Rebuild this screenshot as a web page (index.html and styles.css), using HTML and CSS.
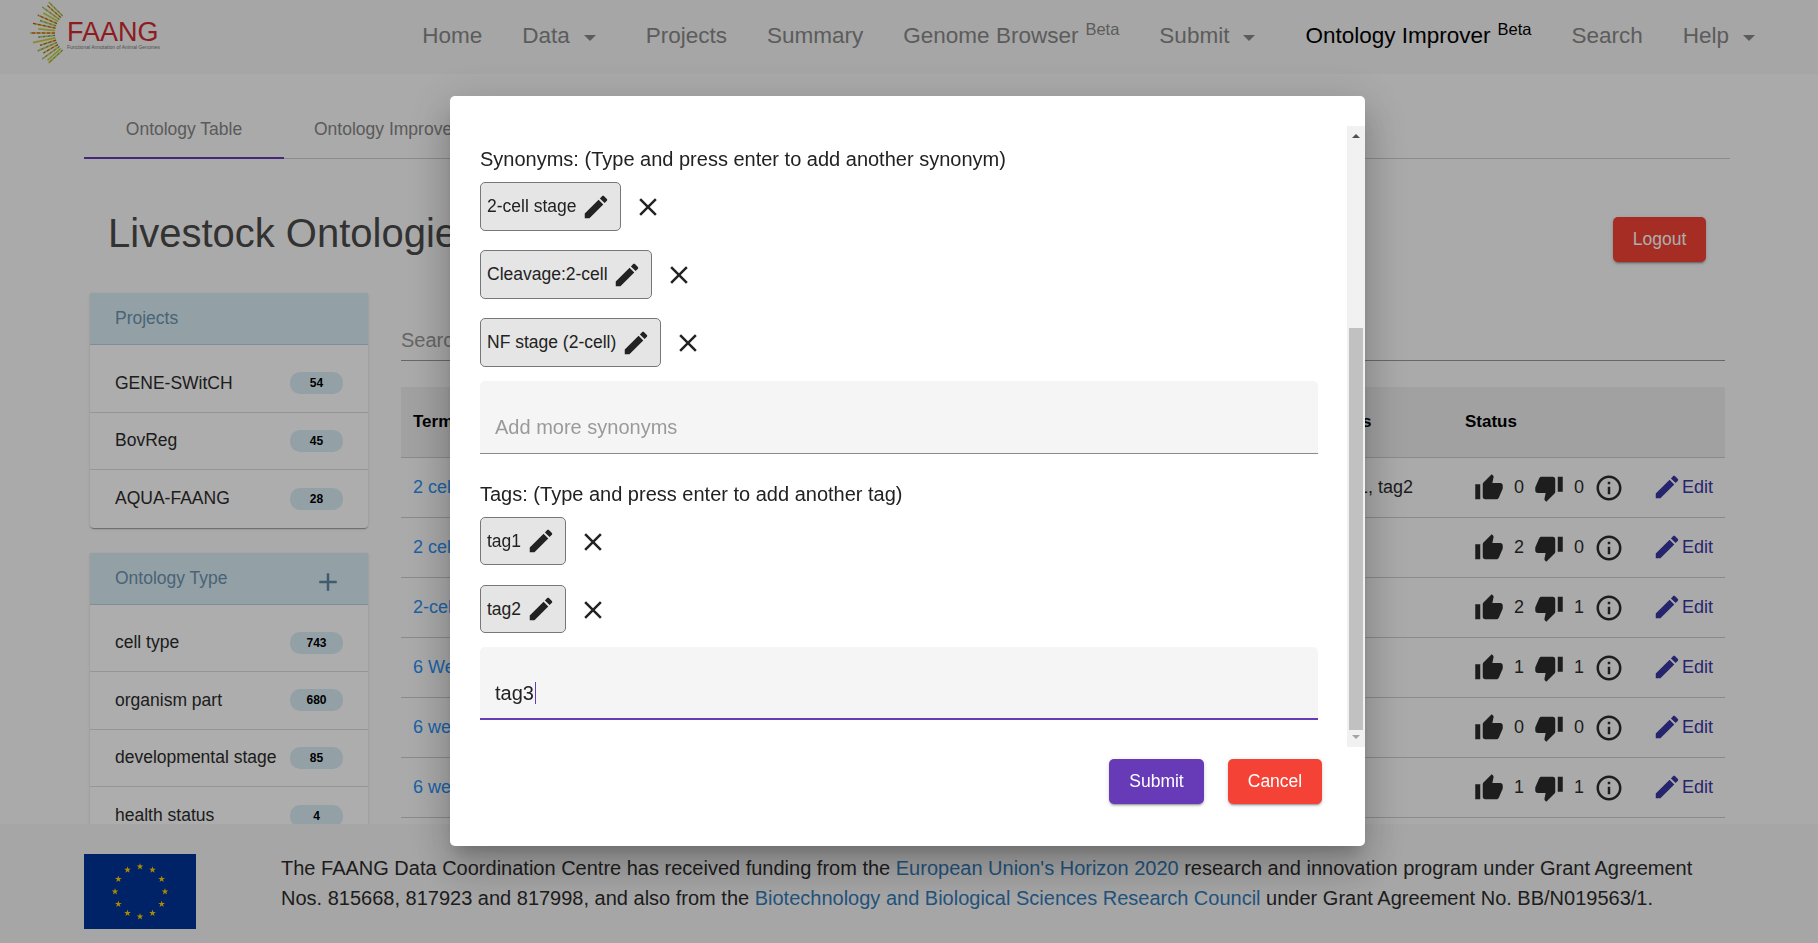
FILE: index.html
```html
<!DOCTYPE html>
<html>
<head>
    <title>FAANG Ontology Improver</title>
    <link rel="stylesheet" href="styles.css">
</head>
<body>
    <svg class="sprite" aria-hidden="true">
        <symbol id="i-up" viewBox="0 0 24 24"><path d="M1 21h4V9H1v12zm22-11c0-1.1-.9-2-2-2h-6.31l.95-4.57.03-.32c0-.41-.17-.79-.44-1.06L14.17 1 7.59 7.59C7.22 7.95 7 8.45 7 9v10c0 1.1.9 2 2 2h9c.83 0 1.54-.5 1.84-1.22l3.02-7.05c.09-.23.14-.47.14-.73v-2z"/></symbol>
        <symbol id="i-down" viewBox="0 0 24 24"><path d="M15 3H6c-.83 0-1.54.5-1.84 1.22l-3.02 7.05c-.09.23-.14.47-.14.73v2c0 1.1.9 2 2 2h6.31l-.95 4.57-.03.32c0 .41.17.79.44 1.06L9.83 23l6.59-6.59c.36-.36.58-.86.58-1.41V5c0-1.1-.9-2-2-2zm4 0v12h4V3h-4z"/></symbol>
        <symbol id="i-info" viewBox="0 0 24 24"><path d="M11 7h2v2h-2zm0 4h2v6h-2zm1-9C6.48 2 2 6.48 2 12s4.48 10 10 10 10-4.48 10-10S17.52 2 12 2zm0 18c-4.41 0-8-3.59-8-8s3.59-8 8-8 8 3.59 8 8-3.59 8-8 8z"/></symbol>
        <symbol id="i-edit" viewBox="0 0 24 24"><path d="M3 17.25V21h3.75L17.81 9.94l-3.75-3.75L3 17.25zM20.71 7.04c.39-.39.39-1.02 0-1.41l-2.34-2.34c-.39-.39-1.02-.39-1.41 0l-1.83 1.83 3.75 3.75 1.83-1.83z"/></symbol>
        <symbol id="i-close" viewBox="0 0 24 24"><path d="M19 6.41L17.59 5 12 10.59 6.41 5 5 6.41 10.59 12 5 17.59 6.41 19 12 13.41 17.59 19 19 17.59 13.41 12z"/></symbol>
        <symbol id="i-add" viewBox="0 0 24 24"><path d="M19 13h-6v6h-2v-6H5v-2h6V5h2v6h6v2z"/></symbol>
    </svg>

    <header class="topbar">
        <div class="logo">
            <svg class="logo-fan" width="36" height="66" viewBox="28 0 36 66">
                <g class="rays-base">
                    <line x1="55" y1="33" x2="30" y2="33"/>
                    <line x1="55.1" y1="30.6" x2="38.2" y2="28.8"/><line x1="55.1" y1="35.4" x2="38.2" y2="37.2"/>
                    <line x1="55.5" y1="28.2" x2="33" y2="23.4"/><line x1="55.5" y1="37.8" x2="33" y2="42.6"/>
                    <line x1="56.1" y1="25.9" x2="40" y2="20.6"/><line x1="56.1" y1="40.1" x2="40" y2="45.4"/>
                    <line x1="57" y1="23.6" x2="37.8" y2="15.1"/><line x1="57" y1="42.4" x2="37.8" y2="50.9"/>
                    <line x1="58.1" y1="21.5" x2="43.4" y2="13"/><line x1="58.1" y1="44.5" x2="43.4" y2="53"/>
                    <line x1="59.4" y1="19.5" x2="42.4" y2="7.1"/><line x1="59.4" y1="46.5" x2="42.4" y2="58.9"/>
                    <line x1="60.9" y1="17.6" x2="47.5" y2="5.6"/><line x1="60.9" y1="48.4" x2="47.5" y2="60.4"/>
                    <line x1="62.6" y1="15.9" x2="48.6" y2="2"/><line x1="62.6" y1="50.1" x2="48.6" y2="63"/>
                </g>
                <g class="rays-red">
                    <line x1="55" y1="33" x2="30" y2="33"/>
                    <line x1="55.5" y1="28.2" x2="33" y2="23.4"/><line x1="56.1" y1="40.1" x2="40" y2="45.4"/>
                    <line x1="57" y1="23.6" x2="37.8" y2="15.1"/><line x1="58.1" y1="44.5" x2="43.4" y2="53"/>
                    <line x1="60.9" y1="17.6" x2="47.5" y2="5.6"/>
                </g>
                <g class="rays-blue">
                    <line x1="55.1" y1="35.4" x2="38.2" y2="37.2"/><line x1="56.1" y1="25.9" x2="40" y2="20.6"/>
                    <line x1="57" y1="42.4" x2="37.8" y2="50.9"/><line x1="59.4" y1="46.5" x2="42.4" y2="58.9"/>
                    <line x1="59.4" y1="19.5" x2="42.4" y2="7.1"/><line x1="62.6" y1="50.1" x2="48.6" y2="63"/>
                    <line x1="62.6" y1="15.9" x2="48.6" y2="2"/>
                </g>
            </svg>
            <div class="logo-text">
                <div class="logo-name">FAANG</div>
                <div class="logo-sub">Functional Annotation of Animal Genomes</div>
            </div>
        </div>
        <nav class="nav">
            <a class="nav-item">Home</a>
            <a class="nav-item">Data<i class="caret"></i></a>
            <a class="nav-item">Projects</a>
            <a class="nav-item">Summary</a>
            <a class="nav-item">Genome Browser<sup>Beta</sup></a>
            <a class="nav-item">Submit<i class="caret"></i></a>
            <a class="nav-item active">Ontology Improver<sup>Beta</sup></a>
            <a class="nav-item">Search</a>
            <a class="nav-item">Help<i class="caret"></i></a>
        </nav>
    </header>

    <main class="page">
        <div class="tabs">
            <div class="tab active">Ontology Table</div>
            <div class="tab">Ontology Improver Dashboard</div>
        </div>

        <div class="title-row">
            <h1>Livestock Ontologies</h1>
            <button class="btn btn-logout">Logout</button>
        </div>

        <div class="columns">
            <aside class="sidebar">
                <section class="card">
                    <div class="card-head">Projects</div>
                    <ul class="list">
                        <li>GENE-SWitCH <span class="badge">54</span></li>
                        <li>BovReg <span class="badge">45</span></li>
                        <li>AQUA-FAANG <span class="badge">28</span></li>
                    </ul>
                </section>
                <section class="card">
                    <div class="card-head">Ontology Type <svg class="icon add"><use href="#i-add"/></svg></div>
                    <ul class="list">
                        <li>cell type <span class="badge">743</span></li>
                        <li>organism part <span class="badge">680</span></li>
                        <li>developmental stage <span class="badge">85</span></li>
                        <li>health status <span class="badge">4</span></li>
                    </ul>
                </section>
            </aside>

            <div class="content">
                <div class="search">Search</div>
                <table>
                    <tr>
                        <th class="col-term">Term</th>
                        <th class="col-tags">Tags</th>
                        <th class="col-status">Status</th>
                        <th class="col-edit"></th>
                    </tr>
                    <tr>
                        <td><a>2 cell stage</a></td>
                        <td>tag1, tag2</td>
                        <td><div class="votes"><svg class="icon"><use href="#i-up"/></svg><span>0</span><svg class="icon"><use href="#i-down"/></svg><span>0</span><svg class="icon"><use href="#i-info"/></svg></div></td>
                        <td><a class="edit"><svg class="icon"><use href="#i-edit"/></svg>Edit</a></td>
                    </tr>
                    <tr>
                        <td><a>2 cell stage embryo</a></td>
                        <td></td>
                        <td><div class="votes"><svg class="icon"><use href="#i-up"/></svg><span>2</span><svg class="icon"><use href="#i-down"/></svg><span>0</span><svg class="icon"><use href="#i-info"/></svg></div></td>
                        <td><a class="edit"><svg class="icon"><use href="#i-edit"/></svg>Edit</a></td>
                    </tr>
                    <tr>
                        <td><a>2-cell stage</a></td>
                        <td></td>
                        <td><div class="votes"><svg class="icon"><use href="#i-up"/></svg><span>2</span><svg class="icon"><use href="#i-down"/></svg><span>1</span><svg class="icon"><use href="#i-info"/></svg></div></td>
                        <td><a class="edit"><svg class="icon"><use href="#i-edit"/></svg>Edit</a></td>
                    </tr>
                    <tr>
                        <td><a>6 Weeks</a></td>
                        <td></td>
                        <td><div class="votes"><svg class="icon"><use href="#i-up"/></svg><span>1</span><svg class="icon"><use href="#i-down"/></svg><span>1</span><svg class="icon"><use href="#i-info"/></svg></div></td>
                        <td><a class="edit"><svg class="icon"><use href="#i-edit"/></svg>Edit</a></td>
                    </tr>
                    <tr>
                        <td><a>6 weeks</a></td>
                        <td></td>
                        <td><div class="votes"><svg class="icon"><use href="#i-up"/></svg><span>0</span><svg class="icon"><use href="#i-down"/></svg><span>0</span><svg class="icon"><use href="#i-info"/></svg></div></td>
                        <td><a class="edit"><svg class="icon"><use href="#i-edit"/></svg>Edit</a></td>
                    </tr>
                    <tr>
                        <td><a>6 weeks old</a></td>
                        <td></td>
                        <td><div class="votes"><svg class="icon"><use href="#i-up"/></svg><span>1</span><svg class="icon"><use href="#i-down"/></svg><span>1</span><svg class="icon"><use href="#i-info"/></svg></div></td>
                        <td><a class="edit"><svg class="icon"><use href="#i-edit"/></svg>Edit</a></td>
                    </tr>
                </table>
            </div>
        </div>
    </main>

    <footer class="footer">
        <svg class="flag" viewBox="0 0 112 75">
            <defs>
                <polygon id="star" points="0,-3.6 .8,-1.1 3.4,-1.1 1.3,.4 2.1,2.9 0,1.4 -2.1,2.9 -1.3,.4 -3.4,-1.1 -.8,-1.1"/>
            </defs>
            <rect width="112" height="75" fill="#003399"/>
            <g fill="#ffcc00">
                <use href="#star" x="56" y="12.5"/>
                <use href="#star" x="68.5" y="15.85"/>
                <use href="#star" x="77.65" y="25"/>
                <use href="#star" x="81" y="37.5"/>
                <use href="#star" x="77.65" y="50"/>
                <use href="#star" x="68.5" y="59.15"/>
                <use href="#star" x="56" y="62.5"/>
                <use href="#star" x="43.5" y="59.15"/>
                <use href="#star" x="34.35" y="50"/>
                <use href="#star" x="31" y="37.5"/>
                <use href="#star" x="34.35" y="25"/>
                <use href="#star" x="43.5" y="15.85"/>
            </g>
        </svg>
        <p>The FAANG Data Coordination Centre has received funding from the <a>European Union's Horizon 2020</a> research and innovation program under Grant Agreement Nos. 815668, 817923 and 817998, and also from the <a>Biotechnology and Biological Sciences Research Council</a> under Grant Agreement No. BB/N019563/1.</p>
    </footer>

    <div class="backdrop">
        <div class="dialog">
            <div class="dialog-body">
                <div class="dialog-scroll">
                    <div class="field-label">Synonyms: (Type and press enter to add another synonym)</div>
                    <div class="chips">
                        <div class="chip-row">
                            <div class="chip">2-cell stage <svg class="icon"><use href="#i-edit"/></svg></div>
                            <svg class="icon"><use href="#i-close"/></svg>
                        </div>
                        <div class="chip-row">
                            <div class="chip">Cleavage:2-cell <svg class="icon"><use href="#i-edit"/></svg></div>
                            <svg class="icon"><use href="#i-close"/></svg>
                        </div>
                        <div class="chip-row">
                            <div class="chip">NF stage (2-cell) <svg class="icon"><use href="#i-edit"/></svg></div>
                            <svg class="icon"><use href="#i-close"/></svg>
                        </div>
                    </div>
                    <div class="field"><span class="placeholder">Add more synonyms</span></div>

                    <div class="field-label tags-label">Tags: (Type and press enter to add another tag)</div>
                    <div class="chips">
                        <div class="chip-row">
                            <div class="chip">tag1 <svg class="icon"><use href="#i-edit"/></svg></div>
                            <svg class="icon"><use href="#i-close"/></svg>
                        </div>
                        <div class="chip-row">
                            <div class="chip">tag2 <svg class="icon"><use href="#i-edit"/></svg></div>
                            <svg class="icon"><use href="#i-close"/></svg>
                        </div>
                    </div>
                    <div class="field focused">tag3<i class="text-caret"></i></div>
                </div>
                <div class="scrollbar" aria-hidden="true">
                    <i class="arrow-up"></i>
                    <div class="scroll-space"></div>
                    <div class="scroll-thumb"></div>
                    <i class="arrow-down"></i>
                </div>
            </div>
            <div class="dialog-actions">
                <button class="btn btn-submit">Submit</button>
                <button class="btn btn-cancel">Cancel</button>
            </div>
        </div>
    </div>
</body>
</html>
```

FILE: styles.css
```css
* {
    box-sizing: border-box;
}
html, body {
    height: 100%;
}
body {
    margin: 0;
    overflow: hidden;
    background-color: #fbfbfb;
    color: #2c2c2c;
    font-family: "Liberation Sans", Arial, sans-serif;
}
.sprite {
    display: none;
}
.icon {
    width: 30px;
    height: 30px;
    flex: none;
    fill: currentColor;
}

/* top bar */
.topbar {
    display: flex;
    justify-content: space-between;
    align-items: center;
    height: 74px;
    background-color: #f5f5f5;
}
.logo {
    display: flex;
    align-items: center;
    margin: -8px 0 0 28px;
}
.logo-fan {
    display: block;
}
.rays-base {
    stroke: #c9cc4a;
    stroke-width: 1.7;
}
.rays-red {
    stroke: #d8352f;
    stroke-width: 1;
    stroke-dasharray: 3 2;
}
.rays-blue {
    stroke: #2f9fc8;
    stroke-width: 1;
    stroke-dasharray: 2 3;
}
.logo-text {
    margin: 6px 0 0 3px;
}
.logo-name {
    color: #d02a30;
    font-size: 27px;
    line-height: 22px;
}
.logo-sub {
    color: #777;
    font-size: 5px;
    line-height: 8px;
    white-space: nowrap;
}
.nav {
    display: flex;
    align-items: center;
    margin-top: -2px;
    padding-right: 33px;
}
.nav-item {
    display: flex;
    align-items: center;
    padding: 0 20px;
    color: #888;
    font-size: 22.5px;
    white-space: nowrap;
}
.nav-item.active {
    color: #000;
}
.nav-item sup {
    margin-left: 7px;
    margin-top: -14px;
    font-size: 16.5px;
}
.caret {
    width: 0;
    height: 0;
    margin: 3px 10px 0 14px;
    border-left: 6px solid transparent;
    border-right: 6px solid transparent;
    border-top: 6px solid #888;
}

/* page */
.page {
    padding: 25px 88px 0 84px;
}
.tabs {
    display: flex;
    height: 60px;
    border-bottom: 1px solid #ccc;
}
.tab {
    width: 200px;
    height: 60px;
    padding-top: 20px;
    color: #868686;
    font-size: 17.5px;
    line-height: 20px;
    text-align: center;
    white-space: nowrap;
}
.tab.active {
    border-bottom: 2px solid #673ab7;
}
.tab + .tab {
    padding-left: 30px;
    text-align: left;
}
.title-row {
    display: flex;
    justify-content: space-between;
    align-items: flex-start;
    height: 134px;
    padding: 0 24px 0 24px;
}
h1 {
    margin: 51px 0 0;
    color: #4b4b4b;
    font-size: 40px;
    font-weight: 400;
    line-height: 46px;
}
.btn {
    height: 45px;
    border: none;
    border-radius: 5px;
    color: #fff;
    font-family: inherit;
    font-size: 17.5px;
    box-shadow: 0 3px 1px -2px rgba(0,0,0,.2), 0 2px 2px 0 rgba(0,0,0,.14), 0 1px 5px 0 rgba(0,0,0,.12);
}
.btn-logout {
    width: 93px;
    margin-top: 58px;
    background-color: #f44336;
}
.columns {
    display: flex;
    align-items: flex-start;
}

/* sidebar */
.sidebar {
    width: 278px;
    margin-left: 6px;
    flex: none;
}
.card {
    margin-bottom: 25px;
    background-color: #fff;
    border-radius: 0 0 4px 4px;
    box-shadow: 0 2px 1px -1px rgba(0,0,0,.2), 0 1px 1px 0 rgba(0,0,0,.14), 0 1px 3px 0 rgba(0,0,0,.12);
}
.card-head {
    display: flex;
    justify-content: space-between;
    align-items: center;
    height: 52px;
    padding: 0 25px;
    background-color: #d9edf7;
    border-bottom: 1px solid #bcd0da;
    color: #6d93ad;
    font-size: 17.5px;
}
.add {
    margin-top: 8px;
    color: #5f87a3;
}
.list {
    margin: 0;
    padding: 10px 0 0;
    list-style: none;
}
.list li {
    display: flex;
    justify-content: space-between;
    align-items: center;
    height: 57.5px;
    padding: 0 25px;
    border-bottom: 1px solid #ddd;
    color: #2c2c2c;
    font-size: 17.5px;
}
.list li:last-child {
    border-bottom: none;
}
.badge {
    width: 53px;
    height: 22px;
    background-color: #d9edf7;
    border-radius: 10px;
    color: #000;
    font-size: 12px;
    font-weight: 700;
    line-height: 22px;
    text-align: center;
}

/* table */
.content {
    flex: 1;
    margin: 0 5px 0 33px;
}
.search {
    height: 68px;
    padding-top: 35px;
    border-bottom: 1px solid #999;
    color: #969696;
    font-size: 20px;
    line-height: 24px;
}
table {
    width: 1324px;
    margin-top: 26px;
    border-collapse: collapse;
    table-layout: fixed;
}
th {
    height: 70px;
    padding: 0 12px;
    background-color: #eee;
    border-bottom: 1px solid #ccc;
    color: #000;
    font-size: 17px;
    text-align: left;
}
td {
    height: 60px;
    padding: 0 12px;
    border-bottom: 1px solid #ccc;
    font-size: 18px;
}
td a {
    color: #2890f5;
}
.col-term {
    width: 920px;
}
.col-tags {
    width: 132px;
}
.col-status {
    width: 187px;
}
.votes {
    display: flex;
    align-items: center;
    gap: 10px;
    padding-left: 9px;
}
.votes span {
    width: 10px;
}
.votes .icon {
    margin-top: 1px;
}
td a.edit {
    display: flex;
    align-items: center;
    color: #3a37a3;
}

/* footer */
.footer {
    position: fixed;
    left: 0;
    right: 0;
    bottom: 0;
    display: flex;
    height: 119px;
    padding: 30px 0 0 84px;
    background-color: #f5f5f5;
}
.flag {
    width: 112px;
    height: 75px;
    flex: none;
}
.footer p {
    width: 1430px;
    margin: -1px 0 0 85px;
    color: #2c2c2c;
    font-size: 20px;
    line-height: 30px;
}
.footer a {
    color: #337ab7;
}

/* dialog */
.backdrop {
    position: fixed;
    top: 0;
    left: 0;
    right: 0;
    bottom: 0;
    padding: 96px 0 0 450px;
    background-color: rgba(0,0,0,.32);
}
.dialog {
    width: 915px;
    height: 750px;
    padding-top: 30px;
    background-color: #fff;
    border-radius: 5px;
    color: #222;
    box-shadow: 0 11px 15px -7px rgba(0,0,0,.2), 0 24px 38px 3px rgba(0,0,0,.14), 0 9px 46px 8px rgba(0,0,0,.12);
}
.dialog-body {
    display: flex;
    height: 621px;
}
.dialog-scroll {
    width: 897px;
    padding: 22px 29px 0 30px;
    overflow: hidden;
}
.field-label {
    margin-bottom: 11px;
    font-size: 20px;
    line-height: 23px;
}
.tags-label {
    margin-top: 29px;
}
.chips {
    display: flex;
    flex-direction: column;
    align-items: flex-start;
    gap: 19.5px;
}
.chip-row {
    display: flex;
    align-items: center;
    gap: 12px;
}
.chip-row > .icon {
    margin-top: 2px;
}
.chip {
    display: flex;
    align-items: center;
    height: 48.5px;
    padding: 1px 9px 0 6px;
    background-color: #e5e5e5;
    border: 1px solid #777;
    border-radius: 5px;
    font-size: 17.5px;
    white-space: pre;
}
.field {
    height: 73px;
    margin-top: 14px;
    padding: 34px 15px 0;
    background-color: #f5f5f5;
    border-bottom: 1px solid #8a8a8a;
    border-radius: 5px 5px 0 0;
    font-size: 20px;
    line-height: 24px;
}
.placeholder {
    color: #9a9a9a;
}
.field.focused {
    border-bottom: 2px solid #673ab7;
}
.text-caret {
    display: inline-block;
    width: 1px;
    height: 22px;
    margin-left: 1px;
    background-color: #673ab7;
    vertical-align: -4px;
}

/* scrollbar drawn by hand so it always shows */
.scrollbar {
    display: flex;
    flex-direction: column;
    align-items: center;
    width: 18px;
    background-color: #f1f1f1;
}
.arrow-up, .arrow-down {
    width: 0;
    height: 0;
    flex: none;
    border-left: 4px solid transparent;
    border-right: 4px solid transparent;
}
.arrow-up {
    margin: 8px 0 5px;
    border-bottom: 4px solid #505050;
}
.arrow-down {
    margin: 5px 0 8px;
    border-top: 4px solid #a3a3a3;
}
.scroll-space {
    flex: 1;
}
.scroll-thumb {
    width: 14px;
    height: 402px;
    background-color: #c1c1c1;
}
.dialog-actions {
    display: flex;
    justify-content: flex-end;
    gap: 24px;
    margin-top: 12px;
    padding-right: 43px;
}
.btn-submit {
    width: 95px;
    background-color: #673ab7;
}
.btn-cancel {
    width: 94px;
    background-color: #f44336;
}
```
